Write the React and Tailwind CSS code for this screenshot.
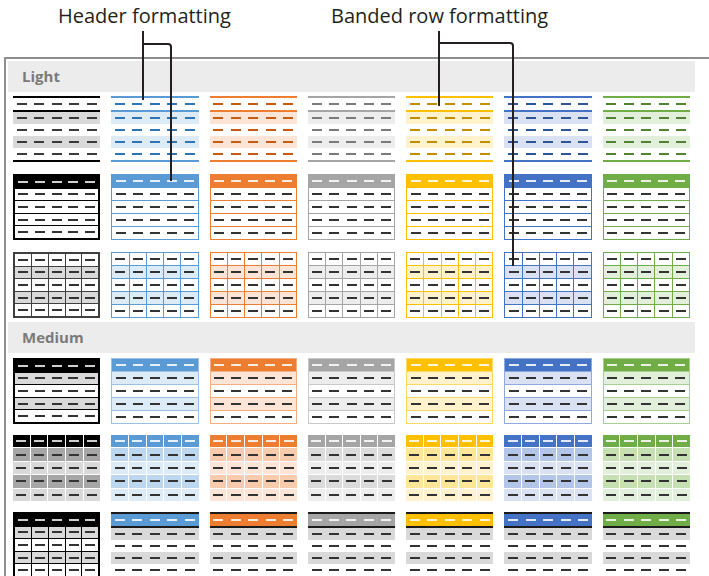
import React from 'react';

const PAL = [
  { main: 'bg-black', mainB: 'border-black', lightB: 'border-black', band: 'bg-[#d9d9d9]', dark: 'bg-[#a6a6a6]', dash: 'bg-[#3a3a3a]', gridB: 'border-[#3f3f3f]', hdr: 'bg-[#cfcfcf]', outer: 'border-2' },
  { main: 'bg-[#5b9bd5]', mainB: 'border-[#5b9bd5]', lightB: 'border-[#9bc2e6]', band: 'bg-[#ddebf7]', dark: 'bg-[#bdd7ee]', dash: 'bg-[#2e75b6]', gridB: 'border-[#5b9bd5]', hdr: 'bg-white/85', outer: 'border' },
  { main: 'bg-[#ed7d31]', mainB: 'border-[#ed7d31]', lightB: 'border-[#f4b084]', band: 'bg-[#fce4d6]', dark: 'bg-[#f8cbad]', dash: 'bg-[#c55a11]', gridB: 'border-[#ed7d31]', hdr: 'bg-white/85', outer: 'border' },
  { main: 'bg-[#a5a5a5]', mainB: 'border-[#a5a5a5]', lightB: 'border-[#c9c9c9]', band: 'bg-[#ededed]', dark: 'bg-[#dbdbdb]', dash: 'bg-[#7b7b7b]', gridB: 'border-[#a5a5a5]', hdr: 'bg-white/85', outer: 'border' },
  { main: 'bg-[#ffc000]', mainB: 'border-[#ffc000]', lightB: 'border-[#ffd966]', band: 'bg-[#fff2cc]', dark: 'bg-[#ffe699]', dash: 'bg-[#bf8f00]', gridB: 'border-[#ffc000]', hdr: 'bg-white/85', outer: 'border' },
  { main: 'bg-[#4472c4]', mainB: 'border-[#4472c4]', lightB: 'border-[#8ea9db]', band: 'bg-[#d9e1f2]', dark: 'bg-[#b4c6e7]', dash: 'bg-[#2f5597]', gridB: 'border-[#4472c4]', hdr: 'bg-white/85', outer: 'border' },
  { main: 'bg-[#70ad47]', mainB: 'border-[#70ad47]', lightB: 'border-[#a9d08e]', band: 'bg-[#e2efda]', dark: 'bg-[#c6e0b4]', dash: 'bg-[#548235]', gridB: 'border-[#70ad47]', hdr: 'bg-white/85', outer: 'border' },
];

const BODY = 'bg-[#333333]';

function Row({ bg = '', dash = BODY, cls = '', grid = false, gridB = '' }) {
  return (
    <div className={`flex-1 flex ${bg} ${cls}`}>
      {[0, 1, 2, 3, 4].map((i) => (
        <div
          key={i}
          className={`flex-1 flex items-center justify-center ${grid && i < 4 ? 'border-r ' + gridB : ''}`}
        >
          <span className={`w-[10px] h-[2px] ${dash}`} />
        </div>
      ))}
    </div>
  );
}

function LightA({ p }) {
  return (
    <div className={`h-[66px] flex flex-col border-t-2 border-b-2 ${p.mainB}`}>
      <Row dash={p.dash} cls={`border-b-2 ${p.mainB}`} />
      <Row bg={p.band} dash={p.dash} />
      <Row dash={p.dash} />
      <Row bg={p.band} dash={p.dash} />
      <Row dash={p.dash} />
    </div>
  );
}

function LightB({ p }) {
  return (
    <div className={`h-[66px] flex flex-col ${p.outer} ${p.mainB}`}>
      <Row bg={p.main} dash={p.hdr} />
      <Row cls={`border-t ${p.mainB}`} />
      <Row cls={`border-t ${p.mainB}`} />
      <Row cls={`border-t ${p.mainB}`} />
      <Row cls={`border-t ${p.mainB}`} />
    </div>
  );
}

function LightC({ p }) {
  return (
    <div className={`h-[66px] flex flex-col ${p.outer} ${p.gridB}`}>
      <Row grid gridB={p.gridB} />
      <Row grid gridB={p.gridB} bg={p.band} cls={`border-t ${p.gridB}`} />
      <Row grid gridB={p.gridB} cls={`border-t ${p.gridB}`} />
      <Row grid gridB={p.gridB} bg={p.band} cls={`border-t ${p.gridB}`} />
      <Row grid gridB={p.gridB} cls={`border-t ${p.gridB}`} />
    </div>
  );
}

function MedA({ p }) {
  return (
    <div className={`h-[66px] flex flex-col ${p.outer} ${p.lightB}`}>
      <Row bg={p.main} dash={p.hdr} />
      <Row bg={p.band} cls={`border-t ${p.lightB}`} />
      <Row cls={`border-t ${p.lightB}`} />
      <Row bg={p.band} cls={`border-t ${p.lightB}`} />
      <Row cls={`border-t ${p.lightB}`} />
    </div>
  );
}

function MedB({ p }) {
  const rows = [p.main, p.dark, p.band, p.dark, p.band];
  return (
    <div className="h-[66px] grid grid-cols-5 grid-rows-5 gap-px bg-white">
      {rows.map((bg, r) =>
        [0, 1, 2, 3, 4].map((c) => (
          <div key={r + '-' + c} className={`flex items-center justify-center ${bg}`}>
            <span className={`w-[10px] h-[2px] ${r === 0 ? p.hdr : BODY}`} />
          </div>
        ))
      )}
    </div>
  );
}

function MedC({ p, first }) {
  if (first) {
    return (
      <div className="h-[66px] flex flex-col border-2 border-black">
        <Row grid gridB="border-black" bg="bg-black" dash={p.hdr} />
        <Row grid gridB="border-black" bg="bg-[#d9d9d9]" cls="border-t border-black" />
        <Row grid gridB="border-black" cls="border-t border-black" />
        <Row grid gridB="border-black" bg="bg-[#d9d9d9]" cls="border-t border-black" />
        <Row grid gridB="border-black" cls="border-t border-black" />
      </div>
    );
  }
  return (
    <div className="h-[66px] flex flex-col border-t-2 border-b-2 border-[#1a1a1a]">
      <Row bg={p.main} dash={p.hdr} cls="border-b-2 border-[#1a1a1a]" />
      <Row bg="bg-[#d9d9d9]" />
      <Row />
      <Row bg="bg-[#d9d9d9]" />
      <Row />
    </div>
  );
}

function Band({ label }) {
  return (
    <div className="ml-[2px] w-[687px] h-[31px] bg-[#ececec] flex items-center pl-[14px]">
      <span className="text-[15px] font-bold text-[#7a7a7a] leading-none" style={{ fontFamily: '"Open Sans", "Noto Sans", sans-serif' }}>
        {label}
      </span>
    </div>
  );
}

export default function App() {
  return (
    <div className="relative w-[709px] h-[576px] bg-white overflow-hidden" style={{ fontFamily: '"Open Sans", "Noto Sans", sans-serif' }}>
      <div className="h-[57px] flex pt-[3px] text-[20px] text-[#231f20] leading-[26px]">
        <div className="ml-[58px] w-[273px] whitespace-nowrap">Header formatting</div>
        <div className="whitespace-nowrap">Banded row formatting</div>
      </div>
      <div className="ml-[4px] border-t-2 border-l-2 border-[#8e8e8e] pt-[2px] h-[600px]">
        <Band label="Light" />
        <div className="ml-[7px] mt-[4px] w-[677px] grid grid-cols-7 gap-x-[11px] gap-y-[12px]">
          {PAL.map((p, i) => <LightA key={'a' + i} p={p} />)}
          {PAL.map((p, i) => <LightB key={'b' + i} p={p} />)}
          {PAL.map((p, i) => <LightC key={'c' + i} p={p} />)}
        </div>
        <div className="mt-[4px]">
          <Band label="Medium" />
        </div>
        <div className="ml-[7px] mt-[5px] w-[677px] grid grid-cols-7 gap-x-[11px] gap-y-[11px]">
          {PAL.map((p, i) => <MedA key={'d' + i} p={p} />)}
          {PAL.map((p, i) => <MedB key={'e' + i} p={p} />)}
          {PAL.map((p, i) => <MedC key={'f' + i} p={p} first={i === 0} />)}
        </div>
      </div>
      <svg className="absolute left-0 top-0 pointer-events-none" width="709" height="576" viewBox="0 0 709 576">
        <g fill="none" stroke="#231f20" strokeWidth="2">
          <path d="M143 31 V100" />
          <path d="M143 44 H168 Q171 44 171 47 V181" />
          <path d="M439 31 V106" />
          <path d="M439 43 H510 Q513 43 513 46 V266" />
        </g>
      </svg>
    </div>
  );
}
